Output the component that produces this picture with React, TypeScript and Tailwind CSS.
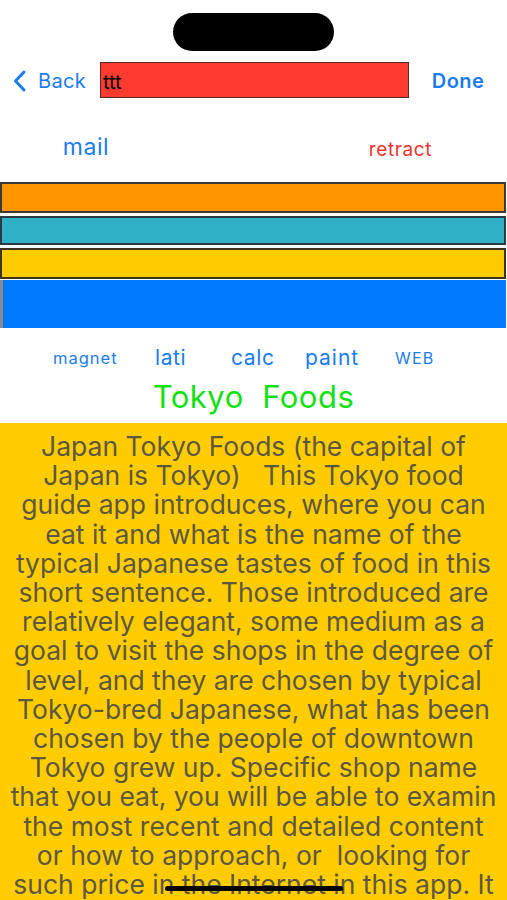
import React from "react";

const lines = [
  "Japan Tokyo Foods (the capital of",
  "Japan is Tokyo)\u00a0\u00a0\u00a0This Tokyo food",
  "guide app introduces, where you can",
  "eat it and what is the name of the",
  "typical Japanese tastes of food in this",
  "short sentence. Those introduced are",
  "relatively elegant, some medium as a",
  "goal to visit the shops in the degree of",
  "level, and they are chosen by typical",
  "Tokyo-bred Japanese, what has been",
  "chosen by the people of downtown",
  "Tokyo grew up. Specific shop name",
  "that you eat, you will be able to examin",
  "the most recent and detailed content",
  "or how to approach, or\u00a0 looking for",
  "such price in the Internet in this app. It",
];

export default function App() {
  return (
    <div
      className="relative w-[507px] h-[900px] overflow-hidden bg-white"
      style={{ fontFamily: "Inter, 'Open Sans', sans-serif" }}
    >
      <div className="pt-[13px] flex justify-center">
        <div className="w-[161px] h-[38px] rounded-full bg-black" />
      </div>
      <div className="mt-[11px] h-[36px] flex items-center">
        <div className="w-[100px] flex items-center pl-[12px] pt-[2px] text-[#1a7cf0] text-[20px]">
          <svg width="16" height="24" viewBox="0 0 16 24" fill="none" stroke="#1a7cf0" strokeWidth="3" strokeLinecap="round" strokeLinejoin="round">
            <path d="M12 3 L3.5 12 L12 21" />
          </svg>
          <span className="ml-[10px] tracking-[0.3px]">Back</span>
        </div>
        <div className="w-[309px] h-[36px] bg-[#ff3b30] border border-[#5a2a28] flex items-center text-black text-[20px] pl-[2px] pt-[3px]">
          ttt
        </div>
        <div className="flex-1 flex justify-center text-[#1a7cf0] text-[20px] font-semibold tracking-[0.4px] pt-[2px]">
          Done
        </div>
      </div>
      <div className="mt-[37px] h-[30px] flex items-center">
        <div className="w-[172px] flex justify-center text-[#1a7cf0] text-[23px] tracking-[0.6px] -mt-[6px]">mail</div>
        <div className="flex-1 flex justify-end pr-[75px] text-[#f0332e] text-[19px] tracking-[0.6px]">retract</div>
      </div>
      <div className="mt-[17px] flex flex-col w-[506px]">
        <div className="h-[31px] bg-[#ff9500] border-2 border-[#3a3a3a]" />
        <div className="mt-[3px] h-[29px] bg-[#30b0c7] border-2 border-[#2a3a3e]" />
        <div className="mt-[3px] h-[31px] bg-[#ffcc00] border-2 border-[#3a3420]" />
        <div className="mt-[1px] h-[48px] bg-[#007aff] border-l-[3px] border-[#8a8a8a]" />
      </div>
      <div className="mt-[17px] h-[26px] flex items-center text-[#1a7cf0]">
        <div className="w-[53px]" />
        <div className="text-[16.5px] tracking-[1px] w-[65px]">magnet</div>
        <div className="ml-[37px] text-[21px] tracking-[0.6px] w-[32px]">lati</div>
        <div className="ml-[44px] text-[21px] tracking-[0.6px] w-[44px]">calc</div>
        <div className="ml-[30px] text-[21px] tracking-[1px] w-[55px]">paint</div>
        <div className="ml-[35px] text-[16px] tracking-[1.2px]">WEB</div>
      </div>
      <div className="mt-[8px] h-[36px] flex justify-center text-[#12e012] text-[31px] leading-[36px] tracking-[0.5px]">
        Tokyo&nbsp; Foods
      </div>
      <div className="mt-[8px] h-[478px] bg-[#ffcc00] pt-[9px] text-center text-[#5d583d] text-[26.5px] leading-[29.2px]">
        {lines.map((l, i) => (
          <div key={i} className="whitespace-nowrap">{l}</div>
        ))}
      </div>
      <div className="absolute left-[165px] bottom-[9px] w-[178px] h-[5px] rounded-full bg-black" />
    </div>
  );
}
